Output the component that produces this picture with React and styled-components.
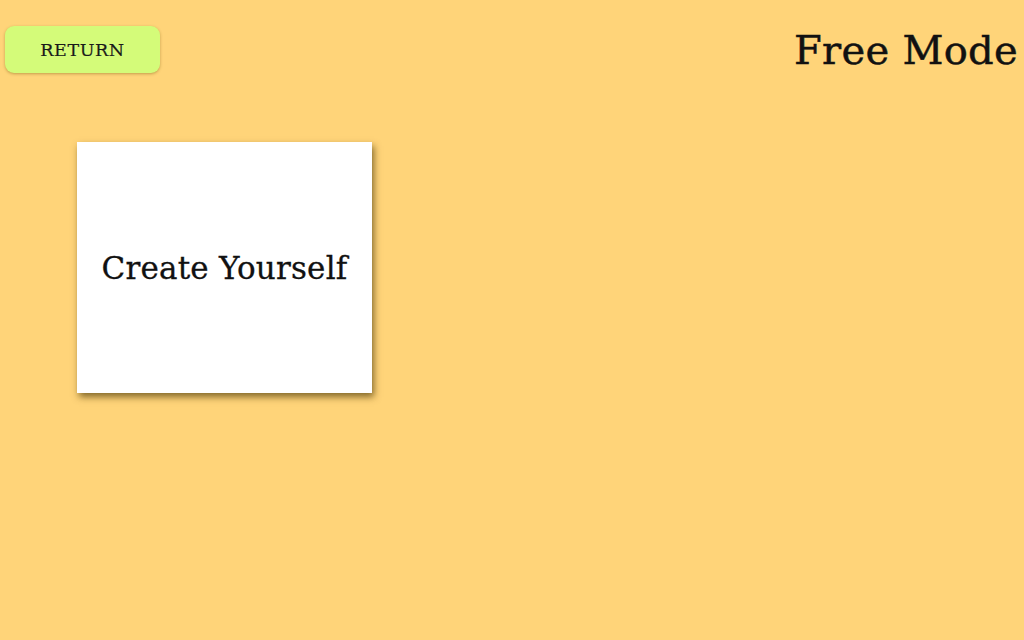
import React from 'react';
import styled, { createGlobalStyle } from 'styled-components';

const GlobalStyle = createGlobalStyle`
  html, body {
    margin: 0;
    padding: 0;
    background: #ffd479;
  }
  body {
    font-family: "DejaVu Serif", "Liberation Serif", serif;
  }
`;

const Page = styled.div`
  width: 1024px;
  height: 640px;
  background: #ffd479;
  overflow: hidden;
`;

const Header = styled.header`
  display: flex;
  justify-content: space-between;
  align-items: flex-start;
  padding: 26px 6px 0 5px;
`;

const ReturnButton = styled.button`
  width: 155px;
  height: 47px;
  border: none;
  border-radius: 9px;
  background: #d4fb79;
  box-shadow: 0 1px 3px rgba(120, 90, 20, 0.45);
  font-family: "DejaVu Serif", "Liberation Serif", serif;
  font-size: 17.5px;
  letter-spacing: 0.6px;
  -webkit-text-stroke: 0.2px #1a1a1a;
  color: #1a1a1a;
  cursor: pointer;
`;

const Title = styled.h1`
  margin: 0;
  margin-top: 0;
  font-family: "DejaVu Serif", "Liberation Serif", serif;
  font-weight: normal;
  font-size: 40px;
  line-height: 48px;
  color: #111;
  letter-spacing: 0.3px;
  -webkit-text-stroke: 0.5px #111;
`;

const Board = styled.main`
  display: flex;
  padding: 68px 0 0 77px;
`;

const Card = styled.div`
  width: 295px;
  height: 251px;
  background: #fff;
  box-shadow: 2px 4px 7px rgba(80, 60, 10, 0.7);
  display: flex;
  align-items: center;
  justify-content: center;
  font-family: "DejaVu Serif", "Liberation Serif", serif;
  font-size: 31px;
  color: #111;
  letter-spacing: 0.2px;
  -webkit-text-stroke: 0.3px #111;
  cursor: pointer;
`;

const App = () => {
  return (
    <>
      <GlobalStyle />
      <Page>
        <Header>
          <ReturnButton>RETURN</ReturnButton>
          <Title>Free Mode</Title>
        </Header>
        <Board>
          <Card>Create Yourself</Card>
        </Board>
      </Page>
    </>
  );
};

export default App;
